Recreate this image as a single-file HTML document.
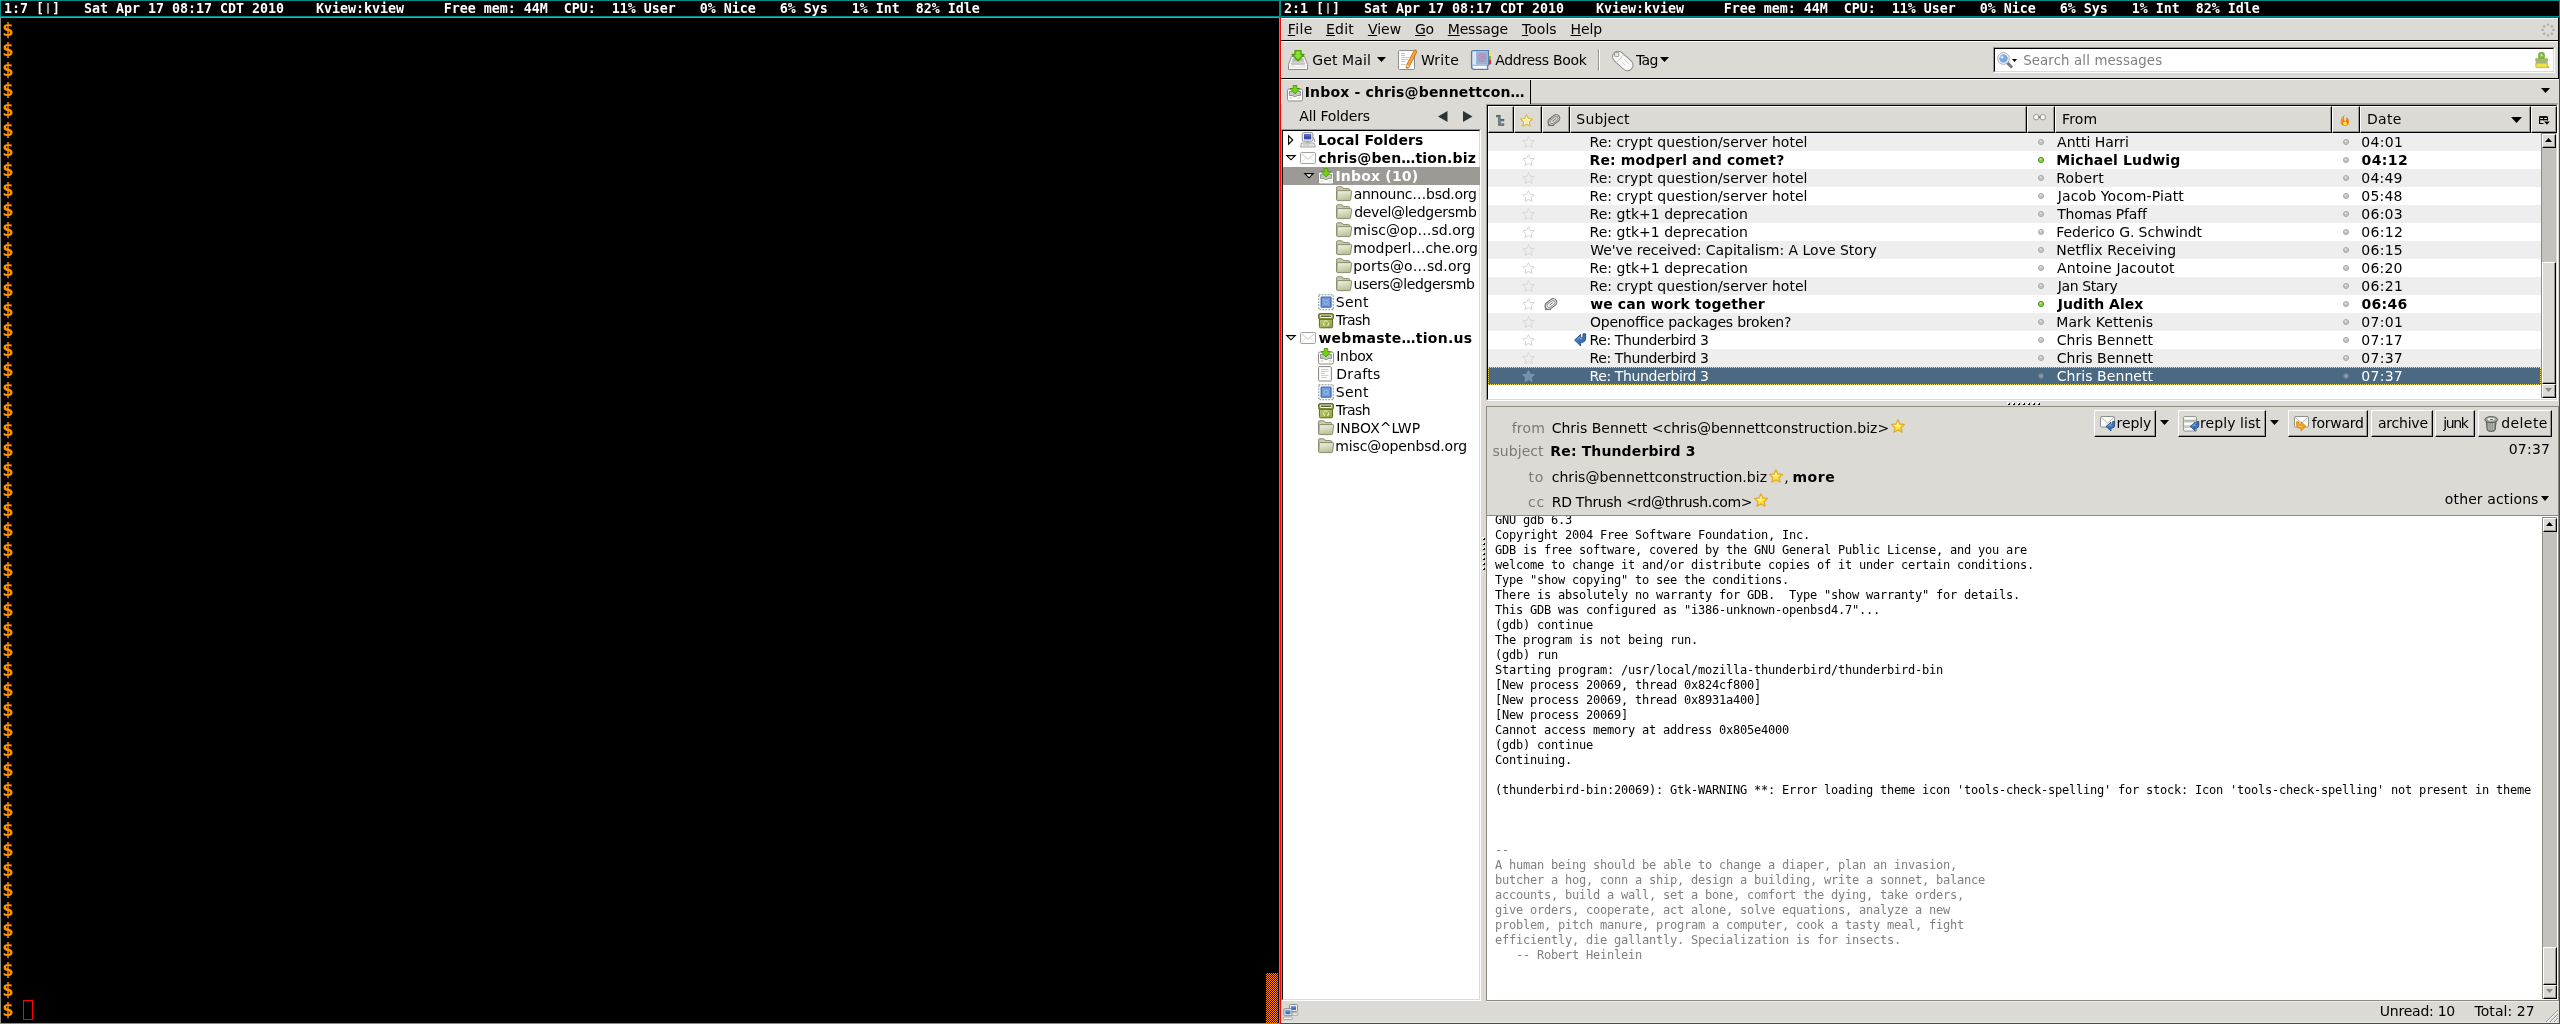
<!DOCTYPE html><html><head><meta charset="utf-8"><title>screen</title><style>
*{box-sizing:border-box}
html,body{margin:0;padding:0}
body{width:2560px;height:1024px;background:#000;overflow:hidden;position:relative;font-family:"DejaVu Sans","Liberation Sans",sans-serif;font-size:14px;line-height:18px;color:#000}
.a{position:absolute}
.t{position:absolute;white-space:pre;line-height:18px;height:18px}
.b{font-weight:bold}
.bar{position:absolute;top:0;height:17px;width:1280px;border:1px solid #008b8b;background:#000;color:#fff;font:bold 13.3333px/15px "DejaVu Sans Mono","Liberation Mono",monospace;white-space:pre;overflow:hidden}
.bar span{position:absolute;left:3px;top:0px;letter-spacing:-0.027px}
.bar i{font-style:normal;display:inline-block;width:8px;text-align:center;font-size:10px;position:relative;top:-2.5px;letter-spacing:0}
.term{position:absolute;left:0;top:17px;width:1280px;height:1007px;border:1px solid #8a8a8a;background:#000}
.d{transform:scaleX(1.18);transform-origin:0 0;position:absolute;left:2.3px;width:12px;height:20px;color:#ff9000;font:bold 16.8px/20px "DejaVu Sans Mono","Liberation Mono",monospace}
.tb{position:absolute;left:1280px;top:17px;width:1280px;height:1007px;border:1px solid #f00;background:#dcdad5}
.hl{position:absolute;height:1px;left:1281px;width:1278px}
.mono{position:absolute;white-space:pre;font:12px/15px "DejaVu Sans Mono","Liberation Mono",monospace;letter-spacing:-0.2246px;height:15px;left:1495px}
.g{color:#808080}
.row{position:absolute;left:1488px;width:1053px;height:18px}
.odd{background:#eee}
.sunk{position:absolute;border:1px solid;border-color:#000 #fff #fff #000;background:#fff}
.btn{position:absolute;border:1px solid;border-color:#fff #000 #000 #fff;background:#dcdad5;box-shadow:inset -1px -1px 0 #9a9894}
.hc{position:absolute;top:106px;height:27px;border:1px solid;border-color:#fff #000 #000 #fff;background:#dcdad5;box-shadow:inset -1px -1px 0 #9a9894}
.lab{color:#7a7a78}
svg{position:absolute;overflow:visible}
</style></head><body><div style="position:absolute;left:0;top:0;width:2560px;height:1024px;will-change:transform">
<div class="term"></div>
<div class="bar" style="left:0"><span>1:7 [<i>|</i>]   Sat Apr 17 08:17 CDT 2010    Kview:kview     Free mem: 44M  CPU:  11% User   0% Nice   6% Sys   1% Int  82% Idle</span></div>
<div class="d" style="top:20px">$</div>
<div class="d" style="top:40px">$</div>
<div class="d" style="top:60px">$</div>
<div class="d" style="top:80px">$</div>
<div class="d" style="top:100px">$</div>
<div class="d" style="top:120px">$</div>
<div class="d" style="top:140px">$</div>
<div class="d" style="top:160px">$</div>
<div class="d" style="top:180px">$</div>
<div class="d" style="top:200px">$</div>
<div class="d" style="top:220px">$</div>
<div class="d" style="top:240px">$</div>
<div class="d" style="top:260px">$</div>
<div class="d" style="top:280px">$</div>
<div class="d" style="top:300px">$</div>
<div class="d" style="top:320px">$</div>
<div class="d" style="top:340px">$</div>
<div class="d" style="top:360px">$</div>
<div class="d" style="top:380px">$</div>
<div class="d" style="top:400px">$</div>
<div class="d" style="top:420px">$</div>
<div class="d" style="top:440px">$</div>
<div class="d" style="top:460px">$</div>
<div class="d" style="top:480px">$</div>
<div class="d" style="top:500px">$</div>
<div class="d" style="top:520px">$</div>
<div class="d" style="top:540px">$</div>
<div class="d" style="top:560px">$</div>
<div class="d" style="top:580px">$</div>
<div class="d" style="top:600px">$</div>
<div class="d" style="top:620px">$</div>
<div class="d" style="top:640px">$</div>
<div class="d" style="top:660px">$</div>
<div class="d" style="top:680px">$</div>
<div class="d" style="top:700px">$</div>
<div class="d" style="top:720px">$</div>
<div class="d" style="top:740px">$</div>
<div class="d" style="top:760px">$</div>
<div class="d" style="top:780px">$</div>
<div class="d" style="top:800px">$</div>
<div class="d" style="top:820px">$</div>
<div class="d" style="top:840px">$</div>
<div class="d" style="top:860px">$</div>
<div class="d" style="top:880px">$</div>
<div class="d" style="top:900px">$</div>
<div class="d" style="top:920px">$</div>
<div class="d" style="top:940px">$</div>
<div class="d" style="top:960px">$</div>
<div class="d" style="top:980px">$</div>
<div class="d" style="top:1000px">$</div>
<div class="a" style="left:23px;top:1000px;width:10px;height:20px;border:1px solid #f00"></div>
<div class="a" style="left:1266px;top:973px;width:12px;height:50px;background-color:#000;background-image:conic-gradient(#ff9000 25%,#000 0 50%,#ff9000 0 75%,#000 0);background-size:2px 2px"></div>
<div class="tb"></div>
<div class="bar" style="left:1280px"><span>2:1 [<i>|</i>]   Sat Apr 17 08:17 CDT 2010    Kview:kview     Free mem: 44M  CPU:  11% User   0% Nice   6% Sys   1% Int  82% Idle</span></div>
<div class="a" style="left:1281px;top:18px;width:1278px;height:1px;background:#fff"></div>
<div class="a" style="left:1281px;top:18px;width:1px;height:22px;background:#fff"></div>
<div class="a" style="left:1281px;top:40px;width:1278px;height:1px;background:#000"></div>
<div class="a" style="left:1281px;top:41px;width:1278px;height:1px;background:#fff"></div>
<div class="a" style="left:2558px;top:18px;width:1px;height:61px;background:#000"></div>
<div class="t " style="left:1287.79px;top:20px;letter-spacing:0.389px;"><u>F</u>ile</div>
<div class="t " style="left:1325.94px;top:20px;letter-spacing:0.228px;"><u>E</u>dit</div>
<div class="t " style="left:1367.92px;top:20px;letter-spacing:0.021px;"><u>V</u>iew</div>
<div class="t " style="left:1415.05px;top:20px;letter-spacing:-0.486px;"><u>G</u>o</div>
<div class="t " style="left:1447.79px;top:20px;letter-spacing:-0.184px;"><u>M</u>essage</div>
<div class="t " style="left:1521.93px;top:20px;letter-spacing:0.057px;"><u>T</u>ools</div>
<div class="t " style="left:1570.54px;top:20px;letter-spacing:-0.094px;"><u>H</u>elp</div>
<div class="a" style="left:1281px;top:78px;width:1278px;height:1px;background:#000"></div>
<div class="a" style="left:1281px;top:79px;width:1278px;height:1px;background:#fff"></div>
<div class="a" style="left:1281px;top:41px;width:1px;height:37px;background:#fff"></div>
<div class="t " style="left:1312.20px;top:51px;letter-spacing:0.129px;">Get Mail</div>
<div class="t " style="left:1420.92px;top:51px;letter-spacing:0.248px;">Write</div>
<div class="t " style="left:1495.17px;top:51px;letter-spacing:-0.295px;">Address Book</div>
<div class="t " style="left:1636.03px;top:51px;letter-spacing:-0.636px;">Tag</div>
<div class="a" style="left:1598px;top:49px;width:1px;height:22px;background:#9a9894"></div>
<div class="a" style="left:1599px;top:49px;width:1px;height:22px;background:#fff"></div>
<svg class="a" style="left:1377px;top:57px" width="9" height="5"><polygon points="0,0 9,0 4.5,5" fill="#000"/></svg>
<svg class="a" style="left:1660px;top:57px" width="9" height="5"><polygon points="0,0 9,0 4.5,5" fill="#000"/></svg>
<svg class="a" style="left:1288px;top:50px" width="20" height="21" viewBox="0 0 20 21"><polygon points="3.5,6.5 16.5,6.5 19.5,14.5 19.5,19.5 0.5,19.5 0.5,14.5" fill="#f6f6f4" stroke="#8c8e89" stroke-width="1" stroke-linejoin="round"/><defs><linearGradient id="rg" x1="0" y1="0" x2="0" y2="1"><stop offset="0" stop-color="#a3a5a0"/><stop offset="0.55" stop-color="#c4c6c2"/><stop offset="1" stop-color="#e6e6e3"/></linearGradient></defs><polygon points="4.8,8.5 15.2,8.5 17,13.8 3,13.8" fill="url(#rg)"/><path d="M1.5,14.5 H7 L8,16 H12 L13,14.5 H18.5 V18.5 H1.5 Z" fill="#ecece9" stroke="#fff" stroke-width="0.8"/><path d="M3,14 H17" stroke="#9c9e99" stroke-width="1"/><polygon points="7,0.6 13,0.6 13,4.5 16,4.5 10,10.8 4,4.5 7,4.5" fill="#86e030" stroke="#4c9a08" stroke-width="1.3" stroke-linejoin="round"/></svg>
<svg class="a" style="left:1397px;top:50px" width="21" height="21" viewBox="0 0 21 21"><rect x="1.5" y="0.5" width="16" height="19" rx="1" fill="#fff" stroke="#8c8e89"/><path d="M4,3.5H8 M4,5.5H8 M4,7.5H12.5 M4,9.5H11.5 M4,11.5H8.5 M4,14.5H8.5" stroke="#c6c8c4" stroke-width="1"/><path d="M18.2,1.6 L10.6,16.4" stroke="#ce7a1d" stroke-width="4" stroke-linecap="round"/><path d="M18,1.8 L10.8,16" stroke="#f9a33d" stroke-width="2.2" stroke-linecap="round"/><polygon points="9.3,14.6 12.3,16.2 9.6,18.2" fill="#f5d9a8"/><polygon points="9.5,17 10.6,17.6 9.6,18.4" fill="#222"/></svg>
<svg class="a" style="left:1471px;top:50px" width="21" height="21" viewBox="0 0 21 21"><rect x="17" y="1.2" width="3" height="5" fill="#fce94f"/><rect x="17" y="6" width="3" height="4.2" fill="#8ab62c"/><path d="M17,10 h3 v3.2 q0,1.6 -3,1.6 z" fill="#ef2929"/><path d="M2.5,0.5 H17.5 V14.5 Q17.5,15.5 16.5,15.8 L16.8,19.5 H3 Q0.5,19.5 0.5,17 V2.5 Q0.5,0.5 2.5,0.5 Z" fill="#a6c0de" stroke="#5a7db0" stroke-width="1.2"/><rect x="1.6" y="1.6" width="3.4" height="13" fill="#dbe6f4"/><rect x="5.6" y="2" width="10.6" height="12" fill="#94b2d6"/><path d="M2.2,16 H15.5 L16,18.6 H3 Q1.6,18.4 2.2,16 Z" fill="#fbfbfb"/><circle cx="11" cy="7.6" r="3.6" fill="none" stroke="#c77aa6" stroke-width="0.9"/><circle cx="11" cy="7.6" r="1.4" fill="none" stroke="#c77aa6" stroke-width="0.9"/><path d="M12.6,6 V8.8 M9.6,11.3 H12.6" stroke="#c77aa6" stroke-width="0.9"/></svg>
<svg class="a" style="left:1612px;top:50px" width="22" height="22" viewBox="0 0 22 22"><g transform="rotate(42 11 11)"><rect x="-1.0" y="5.5" width="23.6" height="11.2" rx="5.6" fill="#f8f9f7" stroke="#8c8e89" stroke-width="1"/><path d="M7.2,6 V16.4" stroke="#c2c4c0" stroke-width="0.9"/><path d="M11,9 H17.5 M11,12.6 H15.5" stroke="#d0d2ce" stroke-width="0.9"/></g><rect x="2.6" y="2.4" width="4.2" height="4.2" rx="1" fill="#e9e9e6" stroke="#8c8e89" stroke-width="0.9"/></svg>
<svg class="a" style="left:2541px;top:23px" width="14" height="14" viewBox="0 0 14 14"><circle cx="12.40" cy="7.00" r="1.2" fill="#aeaca7"/><circle cx="10.82" cy="10.82" r="1.2" fill="#aeaca7"/><circle cx="7.00" cy="12.40" r="1.2" fill="#aeaca7"/><circle cx="3.18" cy="10.82" r="1.2" fill="#aeaca7"/><circle cx="1.60" cy="7.00" r="1.2" fill="#aeaca7"/><circle cx="3.18" cy="3.18" r="1.2" fill="#aeaca7"/><circle cx="7.00" cy="1.60" r="1.2" fill="#aeaca7"/><circle cx="10.82" cy="3.18" r="1.2" fill="#aeaca7"/></svg>
<div class="a" style="left:1993px;top:47px;width:562px;height:26px;border:1px solid;border-color:#9a9895 #fff #fff #9a9895;background:#fff"><div style="width:100%;height:100%;border:1px solid;border-color:#000 #dcdad5 #dcdad5 #000"></div></div>
<div class="t g" style="left:2023.13px;top:52px;letter-spacing:0.130px;font-size:13.3333px">Search all messages</div>
<svg class="a" style="left:2012px;top:59px" width="5" height="3"><polygon points="0,0 5,0 2.5,3" fill="#000"/></svg>
<svg class="a" style="left:1997px;top:52px" width="16" height="16" viewBox="0 0 16 16"><path d="M9.6,10.2 L14.2,14.6" stroke="#7c7e7a" stroke-width="3" stroke-linecap="round"/><circle cx="6.5" cy="6.5" r="5.8" fill="#fff" stroke="#a6a8a4" stroke-width="1"/><circle cx="6.5" cy="6.5" r="4.3" fill="#79a8e2"/><circle cx="5" cy="5" r="1.6" fill="#d5e5f7"/></svg>
<svg class="a" style="left:2535px;top:52px" width="15" height="17" viewBox="0 0 15 17"><rect x="3.6" y="0.3" width="5.8" height="7" rx="2.6" fill="#8fba4e" stroke="#6a9a2c" stroke-width="0.8"/><circle cx="6.5" cy="3.2" r="1" fill="#d9ecc0"/><rect x="0.6" y="6.4" width="12" height="3" rx="1" fill="#9cc35c" stroke="#76a438" stroke-width="0.6"/><rect x="0.8" y="9.2" width="11.6" height="2" fill="#a9aba6"/><path d="M0.8,11.2 H12.4 V14.6 H14 V15.6 H1.6 Q0.6,15.6 0.8,14.4 Z" fill="#efe14b" stroke="#b9a51c" stroke-width="0.7"/></svg>
<div class="a" style="left:1281px;top:80px;width:1px;height:24px;background:#fff"></div>
<div class="a" style="left:1530px;top:80px;width:1px;height:24px;background:#000"></div>
<div class="a" style="left:1531px;top:103px;width:1027px;height:1px;background:#aaa7a2"></div>
<div class="t b" style="left:1304.70px;top:83px;letter-spacing:0.165px;">Inbox - chris@bennettcon…</div>
<svg class="a" style="left:1287px;top:85px" width="16" height="17" viewBox="0 0 16 17"><rect x="0.5" y="4" width="15" height="12" rx="1.5" fill="#fdfdfc" stroke="#8c8e89"/><path d="M2.5,6.5 H13.5 V10.5 H10 L9.2,11.6 H6.8 L6,10.5 H2.5 Z" fill="#c4c6c1" stroke="#8c8e89" stroke-width="0.9"/><path d="M2.5,13 H5.5 M10.5,13 H13.5" stroke="#c9cbc6" stroke-width="1"/><polygon points="6.2,0.5 9.8,0.5 9.8,3.5 13,3.5 8,9 3,3.5 6.2,3.5" fill="#73d216" stroke="#4e9a06" stroke-width="0.9" stroke-linejoin="round"/></svg>
<svg class="a" style="left:2541px;top:88px" width="9" height="5"><polygon points="0,0 9,0 4.5,5" fill="#000"/></svg>
<div class="t " style="left:1299.22px;top:107px;letter-spacing:-0.148px;">All Folders</div>
<svg class="a" style="left:1438px;top:111px" width="10" height="11"><polygon points="9.5,0 9.5,11 0,5.5" fill="#2e3436"/></svg>
<svg class="a" style="left:1463px;top:111px" width="10" height="11"><polygon points="0,0 0,11 9.5,5.5" fill="#2e3436"/></svg>
<div class="a" style="left:1281px;top:129px;width:200px;height:872px;border:1px solid;border-color:#9a9895 #fff #fff #9a9895;background:#fff"><div style="width:100%;height:100%;border:1px solid;border-color:#000 #dcdad5 #dcdad5 #000"></div></div>
<div class="a" style="left:1283px;top:167px;width:197px;height:18px;background:#9d9a96"></div>
<div class="t b" style="left:1317.80px;top:131px;letter-spacing:0.119px;">Local Folders</div>
<svg class="a" style="left:1300px;top:132px" width="16" height="16" viewBox="0 0 16 16"><path d="M12.5,5 q2.6,1 2,5" fill="none" stroke="#777" stroke-width="0.7"/><rect x="2.3" y="0.6" width="10.6" height="8.6" rx="1.3" fill="#f4f4f2" stroke="#868783" stroke-width="0.9"/><rect x="4" y="2.2" width="7.2" height="5.2" fill="#3a49ae"/><rect x="4.6" y="2.8" width="6" height="1.6" fill="#5d6fc4"/><rect x="5.6" y="9.4" width="4" height="1.2" fill="#a9aaa6"/><path d="M1.6,11 H14 L15.4,15 H0.4 Z" fill="#f0f0ee" stroke="#8c8e89" stroke-width="0.8"/><path d="M3,13 H10 M11.2,13 H12.6" stroke="#b5b7b2" stroke-width="1"/></svg>
<div class="t b" style="left:1318.28px;top:149px;letter-spacing:0.142px;">chris@ben…tion.biz</div>
<svg class="a" style="left:1300px;top:149px" width="16" height="16" viewBox="0 0 16 16"><rect x="0.5" y="3.5" width="15" height="11" rx="1.2" fill="#fcfcfb" stroke="#a0a29d"/><path d="M1.8,5 L8,10.2 L14.2,5" fill="none" stroke="#c6c8c3" stroke-width="0.9"/><path d="M1.8,13.2 L6,9 M14.2,13.2 L10,9" stroke="#dcdedb" stroke-width="0.8"/></svg>
<div class="t b" style="left:1335.40px;top:167px;letter-spacing:0.199px;color:#fff;">Inbox (10)</div>
<svg class="a" style="left:1318px;top:168px" width="16" height="17" viewBox="0 0 16 17"><rect x="0.5" y="4" width="15" height="12" rx="1.5" fill="#fdfdfc" stroke="#8c8e89"/><path d="M2.5,6.5 H13.5 V10.5 H10 L9.2,11.6 H6.8 L6,10.5 H2.5 Z" fill="#c4c6c1" stroke="#8c8e89" stroke-width="0.9"/><path d="M2.5,13 H5.5 M10.5,13 H13.5" stroke="#c9cbc6" stroke-width="1"/><polygon points="6.2,0.5 9.8,0.5 9.8,3.5 13,3.5 8,9 3,3.5 6.2,3.5" fill="#73d216" stroke="#4e9a06" stroke-width="0.9" stroke-linejoin="round"/></svg>
<div class="t " style="left:1353.66px;top:185px;letter-spacing:-0.248px;">announc…bsd.org</div>
<svg class="a" style="left:1336px;top:186px" width="16" height="16" viewBox="0 0 16 16"><defs><linearGradient id="fg" x1="0" y1="0" x2="0.3" y2="1"><stop offset="0" stop-color="#f1f3e4"/><stop offset="0.55" stop-color="#d6d9bd"/><stop offset="1" stop-color="#bcc09a"/></linearGradient></defs><path d="M0.6,13.6 V1.8 Q0.6,0.8 1.6,0.8 H5.6 Q6.4,0.8 6.8,1.6 L7.2,2.6 H12.6 Q13.6,2.6 13.6,3.6 V5" fill="#c9cda9" stroke="#7f8262" stroke-width="0.9"/><path d="M2,4.6 H15 Q15.8,4.6 15.6,5.6 L14.6,13.6 Q14.5,14.6 13.5,14.6 H1.6 Q0.6,14.6 0.7,13.6 L1.2,5.4 Q1.3,4.6 2,4.6 Z" fill="url(#fg)" stroke="#7f8262" stroke-width="0.9"/></svg>
<div class="t " style="left:1354.16px;top:203px;letter-spacing:-0.281px;">devel@ledgersmb</div>
<svg class="a" style="left:1336px;top:204px" width="16" height="16" viewBox="0 0 16 16"><defs><linearGradient id="fg" x1="0" y1="0" x2="0.3" y2="1"><stop offset="0" stop-color="#f1f3e4"/><stop offset="0.55" stop-color="#d6d9bd"/><stop offset="1" stop-color="#bcc09a"/></linearGradient></defs><path d="M0.6,13.6 V1.8 Q0.6,0.8 1.6,0.8 H5.6 Q6.4,0.8 6.8,1.6 L7.2,2.6 H12.6 Q13.6,2.6 13.6,3.6 V5" fill="#c9cda9" stroke="#7f8262" stroke-width="0.9"/><path d="M2,4.6 H15 Q15.8,4.6 15.6,5.6 L14.6,13.6 Q14.5,14.6 13.5,14.6 H1.6 Q0.6,14.6 0.7,13.6 L1.2,5.4 Q1.3,4.6 2,4.6 Z" fill="url(#fg)" stroke="#7f8262" stroke-width="0.9"/></svg>
<div class="t " style="left:1353.36px;top:221px;letter-spacing:0.017px;">misc@op…sd.org</div>
<svg class="a" style="left:1336px;top:222px" width="16" height="16" viewBox="0 0 16 16"><defs><linearGradient id="fg" x1="0" y1="0" x2="0.3" y2="1"><stop offset="0" stop-color="#f1f3e4"/><stop offset="0.55" stop-color="#d6d9bd"/><stop offset="1" stop-color="#bcc09a"/></linearGradient></defs><path d="M0.6,13.6 V1.8 Q0.6,0.8 1.6,0.8 H5.6 Q6.4,0.8 6.8,1.6 L7.2,2.6 H12.6 Q13.6,2.6 13.6,3.6 V5" fill="#c9cda9" stroke="#7f8262" stroke-width="0.9"/><path d="M2,4.6 H15 Q15.8,4.6 15.6,5.6 L14.6,13.6 Q14.5,14.6 13.5,14.6 H1.6 Q0.6,14.6 0.7,13.6 L1.2,5.4 Q1.3,4.6 2,4.6 Z" fill="url(#fg)" stroke="#7f8262" stroke-width="0.9"/></svg>
<div class="t " style="left:1353.36px;top:239px;letter-spacing:-0.021px;">modperl…che.org</div>
<svg class="a" style="left:1336px;top:240px" width="16" height="16" viewBox="0 0 16 16"><defs><linearGradient id="fg" x1="0" y1="0" x2="0.3" y2="1"><stop offset="0" stop-color="#f1f3e4"/><stop offset="0.55" stop-color="#d6d9bd"/><stop offset="1" stop-color="#bcc09a"/></linearGradient></defs><path d="M0.6,13.6 V1.8 Q0.6,0.8 1.6,0.8 H5.6 Q6.4,0.8 6.8,1.6 L7.2,2.6 H12.6 Q13.6,2.6 13.6,3.6 V5" fill="#c9cda9" stroke="#7f8262" stroke-width="0.9"/><path d="M2,4.6 H15 Q15.8,4.6 15.6,5.6 L14.6,13.6 Q14.5,14.6 13.5,14.6 H1.6 Q0.6,14.6 0.7,13.6 L1.2,5.4 Q1.3,4.6 2,4.6 Z" fill="url(#fg)" stroke="#7f8262" stroke-width="0.9"/></svg>
<div class="t " style="left:1353.36px;top:257px;letter-spacing:0.126px;">ports@o…sd.org</div>
<svg class="a" style="left:1336px;top:258px" width="16" height="16" viewBox="0 0 16 16"><defs><linearGradient id="fg" x1="0" y1="0" x2="0.3" y2="1"><stop offset="0" stop-color="#f1f3e4"/><stop offset="0.55" stop-color="#d6d9bd"/><stop offset="1" stop-color="#bcc09a"/></linearGradient></defs><path d="M0.6,13.6 V1.8 Q0.6,0.8 1.6,0.8 H5.6 Q6.4,0.8 6.8,1.6 L7.2,2.6 H12.6 Q13.6,2.6 13.6,3.6 V5" fill="#c9cda9" stroke="#7f8262" stroke-width="0.9"/><path d="M2,4.6 H15 Q15.8,4.6 15.6,5.6 L14.6,13.6 Q14.5,14.6 13.5,14.6 H1.6 Q0.6,14.6 0.7,13.6 L1.2,5.4 Q1.3,4.6 2,4.6 Z" fill="url(#fg)" stroke="#7f8262" stroke-width="0.9"/></svg>
<div class="t " style="left:1353.42px;top:275px;letter-spacing:-0.346px;">users@ledgersmb</div>
<svg class="a" style="left:1336px;top:276px" width="16" height="16" viewBox="0 0 16 16"><defs><linearGradient id="fg" x1="0" y1="0" x2="0.3" y2="1"><stop offset="0" stop-color="#f1f3e4"/><stop offset="0.55" stop-color="#d6d9bd"/><stop offset="1" stop-color="#bcc09a"/></linearGradient></defs><path d="M0.6,13.6 V1.8 Q0.6,0.8 1.6,0.8 H5.6 Q6.4,0.8 6.8,1.6 L7.2,2.6 H12.6 Q13.6,2.6 13.6,3.6 V5" fill="#c9cda9" stroke="#7f8262" stroke-width="0.9"/><path d="M2,4.6 H15 Q15.8,4.6 15.6,5.6 L14.6,13.6 Q14.5,14.6 13.5,14.6 H1.6 Q0.6,14.6 0.7,13.6 L1.2,5.4 Q1.3,4.6 2,4.6 Z" fill="url(#fg)" stroke="#7f8262" stroke-width="0.9"/></svg>
<div class="t " style="left:1335.65px;top:293px;letter-spacing:0.361px;">Sent</div>
<svg class="a" style="left:1318px;top:294px" width="16" height="17" viewBox="0 0 16 17"><rect x="0.8" y="0.8" width="14.4" height="14.8" fill="#fdfdfc" stroke="#a3a59f" stroke-width="1.5" stroke-dasharray="1.7 1.25"/><rect x="1.7" y="1.7" width="12.6" height="13" fill="#fdfdfc"/><rect x="3.2" y="3.2" width="9.8" height="10" rx="0.6" fill="#6f9ad6" stroke="#3c6cc0" stroke-width="1.3"/><circle cx="8.1" cy="8.2" r="2.1" fill="none" stroke="#a9c4ea" stroke-width="0.8"/><path d="M4.6,4.6 L6,6 M11.6,4.6 L10.2,6 M4.6,11.8 L6,10.4 M11.6,11.8 L10.2,10.4" stroke="#a9c4ea" stroke-width="0.6"/></svg>
<div class="t " style="left:1336.03px;top:311px;letter-spacing:-0.588px;">Trash</div>
<svg class="a" style="left:1318px;top:313px" width="16" height="16" viewBox="0 0 16 16"><defs><linearGradient id="tg" x1="0" y1="0" x2="1" y2="1"><stop offset="0" stop-color="#c3cc78"/><stop offset="1" stop-color="#8f9c3c"/></linearGradient></defs><path d="M1.4,6 H14.6 V13.6 Q14.6,14.8 13.4,14.8 H2.6 Q1.4,14.8 1.4,13.6 Z" fill="url(#tg)" stroke="#5b6a1e" stroke-width="1"/><rect x="0.5" y="0.6" width="15" height="5.6" rx="1.6" fill="#8b9a3a" stroke="#5b6a1e" stroke-width="1"/><rect x="1.8" y="1.8" width="12.4" height="3.2" rx="1.4" fill="#f3f4ee"/><rect x="2.6" y="2.4" width="10.8" height="1.7" rx="0.8" fill="#5a5c58"/><path d="M6.2,8.4 L8,7.6 L9.6,8.6 M10.4,9.6 L10.6,11.6 L9,12.4 M7,12.6 L5.6,11.4 L5.8,9.6" fill="none" stroke="#e4e9c4" stroke-width="1.1"/></svg>
<div class="t b" style="left:1318.41px;top:329px;letter-spacing:0.263px;">webmaste…tion.us</div>
<svg class="a" style="left:1300px;top:329px" width="16" height="16" viewBox="0 0 16 16"><rect x="0.5" y="3.5" width="15" height="11" rx="1.2" fill="#fcfcfb" stroke="#a0a29d"/><path d="M1.8,5 L8,10.2 L14.2,5" fill="none" stroke="#c6c8c3" stroke-width="0.9"/><path d="M1.8,13.2 L6,9 M14.2,13.2 L10,9" stroke="#dcdedb" stroke-width="0.8"/></svg>
<div class="t " style="left:1336.24px;top:347px;letter-spacing:-0.295px;">Inbox</div>
<svg class="a" style="left:1318px;top:348px" width="16" height="17" viewBox="0 0 16 17"><rect x="0.5" y="4" width="15" height="12" rx="1.5" fill="#fdfdfc" stroke="#8c8e89"/><path d="M2.5,6.5 H13.5 V10.5 H10 L9.2,11.6 H6.8 L6,10.5 H2.5 Z" fill="#c4c6c1" stroke="#8c8e89" stroke-width="0.9"/><path d="M2.5,13 H5.5 M10.5,13 H13.5" stroke="#c9cbc6" stroke-width="1"/><polygon points="6.2,0.5 9.8,0.5 9.8,3.5 13,3.5 8,9 3,3.5 6.2,3.5" fill="#73d216" stroke="#4e9a06" stroke-width="0.9" stroke-linejoin="round"/></svg>
<div class="t " style="left:1336.24px;top:365px;letter-spacing:0.303px;">Drafts</div>
<svg class="a" style="left:1318px;top:366px" width="14" height="16" viewBox="0 0 14 16"><rect x="0.6" y="0.6" width="12.8" height="14.4" rx="1" fill="#fcfcfb" stroke="#868783" stroke-width="1"/><path d="M3,3.5H10.5 M3,5.5H10.5 M3,7.5H7 M3,9.5H10.5 M3,11.5H9" stroke="#cfd0cc" stroke-width="1"/></svg>
<div class="t " style="left:1335.65px;top:383px;letter-spacing:0.361px;">Sent</div>
<svg class="a" style="left:1318px;top:384px" width="16" height="17" viewBox="0 0 16 17"><rect x="0.8" y="0.8" width="14.4" height="14.8" fill="#fdfdfc" stroke="#a3a59f" stroke-width="1.5" stroke-dasharray="1.7 1.25"/><rect x="1.7" y="1.7" width="12.6" height="13" fill="#fdfdfc"/><rect x="3.2" y="3.2" width="9.8" height="10" rx="0.6" fill="#6f9ad6" stroke="#3c6cc0" stroke-width="1.3"/><circle cx="8.1" cy="8.2" r="2.1" fill="none" stroke="#a9c4ea" stroke-width="0.8"/><path d="M4.6,4.6 L6,6 M11.6,4.6 L10.2,6 M4.6,11.8 L6,10.4 M11.6,11.8 L10.2,10.4" stroke="#a9c4ea" stroke-width="0.6"/></svg>
<div class="t " style="left:1336.03px;top:401px;letter-spacing:-0.588px;">Trash</div>
<svg class="a" style="left:1318px;top:403px" width="16" height="16" viewBox="0 0 16 16"><defs><linearGradient id="tg" x1="0" y1="0" x2="1" y2="1"><stop offset="0" stop-color="#c3cc78"/><stop offset="1" stop-color="#8f9c3c"/></linearGradient></defs><path d="M1.4,6 H14.6 V13.6 Q14.6,14.8 13.4,14.8 H2.6 Q1.4,14.8 1.4,13.6 Z" fill="url(#tg)" stroke="#5b6a1e" stroke-width="1"/><rect x="0.5" y="0.6" width="15" height="5.6" rx="1.6" fill="#8b9a3a" stroke="#5b6a1e" stroke-width="1"/><rect x="1.8" y="1.8" width="12.4" height="3.2" rx="1.4" fill="#f3f4ee"/><rect x="2.6" y="2.4" width="10.8" height="1.7" rx="0.8" fill="#5a5c58"/><path d="M6.2,8.4 L8,7.6 L9.6,8.6 M10.4,9.6 L10.6,11.6 L9,12.4 M7,12.6 L5.6,11.4 L5.8,9.6" fill="none" stroke="#e4e9c4" stroke-width="1.1"/></svg>
<div class="t " style="left:1336.24px;top:419px;letter-spacing:-0.040px;">INBOX^LWP</div>
<svg class="a" style="left:1318px;top:420px" width="16" height="16" viewBox="0 0 16 16"><defs><linearGradient id="fg" x1="0" y1="0" x2="0.3" y2="1"><stop offset="0" stop-color="#f1f3e4"/><stop offset="0.55" stop-color="#d6d9bd"/><stop offset="1" stop-color="#bcc09a"/></linearGradient></defs><path d="M0.6,13.6 V1.8 Q0.6,0.8 1.6,0.8 H5.6 Q6.4,0.8 6.8,1.6 L7.2,2.6 H12.6 Q13.6,2.6 13.6,3.6 V5" fill="#c9cda9" stroke="#7f8262" stroke-width="0.9"/><path d="M2,4.6 H15 Q15.8,4.6 15.6,5.6 L14.6,13.6 Q14.5,14.6 13.5,14.6 H1.6 Q0.6,14.6 0.7,13.6 L1.2,5.4 Q1.3,4.6 2,4.6 Z" fill="url(#fg)" stroke="#7f8262" stroke-width="0.9"/></svg>
<div class="t " style="left:1335.36px;top:437px;letter-spacing:-0.143px;">misc@openbsd.org</div>
<svg class="a" style="left:1318px;top:438px" width="16" height="16" viewBox="0 0 16 16"><defs><linearGradient id="fg" x1="0" y1="0" x2="0.3" y2="1"><stop offset="0" stop-color="#f1f3e4"/><stop offset="0.55" stop-color="#d6d9bd"/><stop offset="1" stop-color="#bcc09a"/></linearGradient></defs><path d="M0.6,13.6 V1.8 Q0.6,0.8 1.6,0.8 H5.6 Q6.4,0.8 6.8,1.6 L7.2,2.6 H12.6 Q13.6,2.6 13.6,3.6 V5" fill="#c9cda9" stroke="#7f8262" stroke-width="0.9"/><path d="M2,4.6 H15 Q15.8,4.6 15.6,5.6 L14.6,13.6 Q14.5,14.6 13.5,14.6 H1.6 Q0.6,14.6 0.7,13.6 L1.2,5.4 Q1.3,4.6 2,4.6 Z" fill="url(#fg)" stroke="#7f8262" stroke-width="0.9"/></svg>
<svg class="a" style="left:1288px;top:135px" width="7" height="10"><polygon points="0.6,0.8 0.6,9.2 4.8,5" fill="#fff" stroke="#000" stroke-width="1.1"/></svg>
<svg class="a" style="left:1285.5px;top:155px" width="10" height="7"><polygon points="0.8,0.6 9.2,0.6 5,4.8" fill="#fff" stroke="#000" stroke-width="1.1"/></svg>
<svg class="a" style="left:1303.5px;top:173px" width="10" height="7"><polygon points="0.8,0.6 9.2,0.6 5,4.8" fill="#fff" stroke="#000" stroke-width="1.1"/></svg>
<svg class="a" style="left:1285.5px;top:335px" width="10" height="7"><polygon points="0.8,0.6 9.2,0.6 5,4.8" fill="#fff" stroke="#000" stroke-width="1.1"/></svg>
<div class="a" style="left:1486px;top:104px;width:1072px;height:297px;border:1px solid;border-color:#9a9895 #fff #fff #9a9895;background:#fff"><div style="width:100%;height:100%;border:1px solid;border-color:#000 #dcdad5 #dcdad5 #000"></div></div>
<div class="hc" style="left:1488px;width:26px"></div>
<div class="hc" style="left:1514px;width:28px"></div>
<div class="hc" style="left:1542px;width:28px"></div>
<div class="hc" style="left:1570px;width:457px"></div>
<div class="hc" style="left:2027px;width:28px"></div>
<div class="hc" style="left:2055px;width:277px"></div>
<div class="hc" style="left:2332px;width:28px"></div>
<div class="hc" style="left:2360px;width:171px"></div>
<div class="hc" style="left:2531px;width:26px"></div>
<div class="t " style="left:1576.35px;top:110px;letter-spacing:0.152px;">Subject</div>
<div class="t " style="left:2062.04px;top:110px;letter-spacing:0.159px;">From</div>
<div class="t " style="left:2367.04px;top:110px;letter-spacing:0.283px;">Date</div>
<svg class="a" style="left:2511px;top:117px" width="11" height="6"><polygon points="0,0 11,0 5.5,6" fill="#000"/></svg>
<svg class="a" style="left:1496px;top:115px" width="9" height="11" viewBox="0 0 9 11"><path d="M0.2,1.2 H3.4 V9.6 H8.2 M3.4,5.2 H8.2" fill="none" stroke="#43525a" stroke-width="2.3" stroke-linejoin="miter"/><path d="M0.8,1.2 H3.4 V9.6 H7.6 M3.4,5.2 H7.6" fill="none" stroke="#9eaab0" stroke-width="0.6"/></svg>
<svg class="a" style="left:1520px;top:114px" width="13" height="12.6" viewBox="0 0 16 15.6"><polygon points="8,0.8 10.2,5.6 15.4,6.2 11.5,9.8 12.6,15 8,12.4 3.4,15 4.5,9.8 0.6,6.2 5.8,5.6" fill="#fffdf2" stroke="#dcb526" stroke-width="1.3" stroke-linejoin="round"/><polygon points="8,5.4 9,7.6 11.2,7.9 9.6,9.4 10,11.6 8,10.5 6,11.6 6.4,9.4 4.8,7.9 7,7.6" fill="#f6e88e"/></svg>
<svg class="a" style="left:1548px;top:114px" width="12" height="12" viewBox="0 0 12 12"><g transform="rotate(-38 6 6)"><rect x="-0.6" y="2.4" width="13" height="7.2" rx="3.6" fill="none" stroke="#6f716d" stroke-width="1.1"/><rect x="1.6" y="3.9" width="9" height="4.2" rx="2.1" fill="none" stroke="#8f918d" stroke-width="1"/><path d="M4,6 H9" stroke="#6f716d" stroke-width="0.9"/></g><path d="M0.4,7.4 V11.6 H6" fill="none" stroke="#6f716d" stroke-width="1"/></svg>
<svg class="a" style="left:2033px;top:114px" width="13" height="7" viewBox="0 0 13 7"><circle cx="3.2" cy="3.2" r="2.7" fill="#f4f8fc" stroke="#8c8e89" stroke-width="0.9"/><circle cx="9.8" cy="3.2" r="2.7" fill="#f4f8fc" stroke="#8c8e89" stroke-width="0.9"/><rect x="5.6" y="2.4" width="1.8" height="1.6" fill="#6c6e6a"/></svg>
<svg class="a" style="left:2340px;top:114px" width="10" height="12.4" viewBox="0 0 10 12.4"><path d="M5.4,0.2 Q3.6,2 3.8,4.4 Q4,6.6 5.4,7.2 Q6.8,6.4 6.4,3 Q9.6,5.6 8.8,9 Q7.8,12 4.8,12 Q1,11.6 0.6,8 Q0.4,4 5.4,0.2 Z" fill="#f57900"/><path d="M3,3.6 Q1.6,6 2,9" stroke="#fcaf3e" stroke-width="1" fill="none"/><circle cx="5" cy="9.4" r="1.9" fill="#fce94f"/></svg>
<svg class="a" style="left:2539px;top:116px" width="11" height="10" viewBox="0 0 11 10"><path d="M0.6,1 H8.6" stroke="#000" stroke-width="1.8"/><path d="M0.6,0.4 V7.5 H4.4 M0.6,3.6 H8.6 M4.6,1 V4.4 M8.5,1 V4.6" fill="none" stroke="#000" stroke-width="1.1"/><polygon points="5,5.4 10.8,5.4 7.9,8.8" fill="#000"/></svg>
<div class="row odd" style="top:133px"></div>
<div class="t " style="left:1589.54px;top:133px;letter-spacing:0.036px;">Re: crypt question/server hotel</div>
<div class="t " style="left:2057.12px;top:133px;letter-spacing:-0.031px;">Antti Harri</div>
<div class="t " style="left:2361.35px;top:133px;letter-spacing:0.276px;">04:01</div>
<svg class="a" style="left:1522px;top:136px" width="13" height="12" viewBox="0 0 16 15.6"><polygon points="8,0.8 10.2,5.6 15.4,6.2 11.5,9.8 12.6,15 8,12.4 3.4,15 4.5,9.8 0.6,6.2 5.8,5.6" fill="none" stroke="#d6d6d6" stroke-width="1.3" stroke-linejoin="round"/></svg>
<svg class="a" style="left:2038px;top:139px" width="6" height="6"><circle cx="3" cy="3" r="2.5" fill="#c6c6c6" stroke="#a6a6a6" stroke-width="1"/><circle cx="2.6" cy="2.2" r="0.9" fill="#e4e4e4"/></svg>
<svg class="a" style="left:2343px;top:139px" width="6" height="6"><circle cx="3" cy="3" r="2.5" fill="#c6c6c6" stroke="#a6a6a6" stroke-width="1"/><circle cx="2.6" cy="2.2" r="0.9" fill="#e4e4e4"/></svg>
<div class="t b" style="left:1589.60px;top:151px;letter-spacing:0.119px;">Re: modperl and comet?</div>
<div class="t b" style="left:2056.30px;top:151px;letter-spacing:0.133px;">Michael Ludwig</div>
<div class="t b" style="left:2361.53px;top:151px;letter-spacing:0.390px;">04:12</div>
<svg class="a" style="left:1522px;top:154px" width="13" height="12" viewBox="0 0 16 15.6"><polygon points="8,0.8 10.2,5.6 15.4,6.2 11.5,9.8 12.6,15 8,12.4 3.4,15 4.5,9.8 0.6,6.2 5.8,5.6" fill="none" stroke="#d6d6d6" stroke-width="1.3" stroke-linejoin="round"/></svg>
<svg class="a" style="left:2038px;top:157px" width="6" height="6"><circle cx="3" cy="3" r="2.5" fill="#7ed83a" stroke="#3f8f0c" stroke-width="1"/><circle cx="2.6" cy="2.2" r="0.9" fill="#c4f29c"/></svg>
<svg class="a" style="left:2343px;top:157px" width="6" height="6"><circle cx="3" cy="3" r="2.5" fill="#c6c6c6" stroke="#a6a6a6" stroke-width="1"/><circle cx="2.6" cy="2.2" r="0.9" fill="#e4e4e4"/></svg>
<div class="row odd" style="top:169px"></div>
<div class="t " style="left:1589.54px;top:169px;letter-spacing:0.036px;">Re: crypt question/server hotel</div>
<div class="t " style="left:2056.24px;top:169px;letter-spacing:0.217px;">Robert</div>
<div class="t " style="left:2361.35px;top:169px;letter-spacing:0.199px;">04:49</div>
<svg class="a" style="left:1522px;top:172px" width="13" height="12" viewBox="0 0 16 15.6"><polygon points="8,0.8 10.2,5.6 15.4,6.2 11.5,9.8 12.6,15 8,12.4 3.4,15 4.5,9.8 0.6,6.2 5.8,5.6" fill="none" stroke="#d6d6d6" stroke-width="1.3" stroke-linejoin="round"/></svg>
<svg class="a" style="left:2038px;top:175px" width="6" height="6"><circle cx="3" cy="3" r="2.5" fill="#c6c6c6" stroke="#a6a6a6" stroke-width="1"/><circle cx="2.6" cy="2.2" r="0.9" fill="#e4e4e4"/></svg>
<svg class="a" style="left:2343px;top:175px" width="6" height="6"><circle cx="3" cy="3" r="2.5" fill="#c6c6c6" stroke="#a6a6a6" stroke-width="1"/><circle cx="2.6" cy="2.2" r="0.9" fill="#e4e4e4"/></svg>
<div class="t " style="left:1589.54px;top:187px;letter-spacing:0.036px;">Re: crypt question/server hotel</div>
<div class="t " style="left:2057.71px;top:187px;letter-spacing:0.128px;">Jacob Yocom-Piatt</div>
<div class="t " style="left:2361.35px;top:187px;letter-spacing:0.193px;">05:48</div>
<svg class="a" style="left:1522px;top:190px" width="13" height="12" viewBox="0 0 16 15.6"><polygon points="8,0.8 10.2,5.6 15.4,6.2 11.5,9.8 12.6,15 8,12.4 3.4,15 4.5,9.8 0.6,6.2 5.8,5.6" fill="none" stroke="#d6d6d6" stroke-width="1.3" stroke-linejoin="round"/></svg>
<svg class="a" style="left:2038px;top:193px" width="6" height="6"><circle cx="3" cy="3" r="2.5" fill="#c6c6c6" stroke="#a6a6a6" stroke-width="1"/><circle cx="2.6" cy="2.2" r="0.9" fill="#e4e4e4"/></svg>
<svg class="a" style="left:2343px;top:193px" width="6" height="6"><circle cx="3" cy="3" r="2.5" fill="#c6c6c6" stroke="#a6a6a6" stroke-width="1"/><circle cx="2.6" cy="2.2" r="0.9" fill="#e4e4e4"/></svg>
<div class="row odd" style="top:205px"></div>
<div class="t " style="left:1589.54px;top:205px;letter-spacing:0.016px;">Re: gtk+1 deprecation</div>
<div class="t " style="left:2057.23px;top:205px;letter-spacing:-0.187px;">Thomas Pfaff</div>
<div class="t " style="left:2361.35px;top:205px;letter-spacing:0.234px;">06:03</div>
<svg class="a" style="left:1522px;top:208px" width="13" height="12" viewBox="0 0 16 15.6"><polygon points="8,0.8 10.2,5.6 15.4,6.2 11.5,9.8 12.6,15 8,12.4 3.4,15 4.5,9.8 0.6,6.2 5.8,5.6" fill="none" stroke="#d6d6d6" stroke-width="1.3" stroke-linejoin="round"/></svg>
<svg class="a" style="left:2038px;top:211px" width="6" height="6"><circle cx="3" cy="3" r="2.5" fill="#c6c6c6" stroke="#a6a6a6" stroke-width="1"/><circle cx="2.6" cy="2.2" r="0.9" fill="#e4e4e4"/></svg>
<svg class="a" style="left:2343px;top:211px" width="6" height="6"><circle cx="3" cy="3" r="2.5" fill="#c6c6c6" stroke="#a6a6a6" stroke-width="1"/><circle cx="2.6" cy="2.2" r="0.9" fill="#e4e4e4"/></svg>
<div class="t " style="left:1589.54px;top:223px;letter-spacing:0.016px;">Re: gtk+1 deprecation</div>
<div class="t " style="left:2056.24px;top:223px;letter-spacing:-0.095px;">Federico G. Schwindt</div>
<div class="t " style="left:2361.35px;top:223px;letter-spacing:0.304px;">06:12</div>
<svg class="a" style="left:1522px;top:226px" width="13" height="12" viewBox="0 0 16 15.6"><polygon points="8,0.8 10.2,5.6 15.4,6.2 11.5,9.8 12.6,15 8,12.4 3.4,15 4.5,9.8 0.6,6.2 5.8,5.6" fill="none" stroke="#d6d6d6" stroke-width="1.3" stroke-linejoin="round"/></svg>
<svg class="a" style="left:2038px;top:229px" width="6" height="6"><circle cx="3" cy="3" r="2.5" fill="#c6c6c6" stroke="#a6a6a6" stroke-width="1"/><circle cx="2.6" cy="2.2" r="0.9" fill="#e4e4e4"/></svg>
<svg class="a" style="left:2343px;top:229px" width="6" height="6"><circle cx="3" cy="3" r="2.5" fill="#c6c6c6" stroke="#a6a6a6" stroke-width="1"/><circle cx="2.6" cy="2.2" r="0.9" fill="#e4e4e4"/></svg>
<div class="row odd" style="top:241px"></div>
<div class="t " style="left:1590.17px;top:241px;letter-spacing:-0.025px;">We&#x27;ve received: Capitalism: A Love Story</div>
<div class="t " style="left:2056.24px;top:241px;letter-spacing:0.129px;">Netflix Receiving</div>
<div class="t " style="left:2361.35px;top:241px;letter-spacing:0.259px;">06:15</div>
<svg class="a" style="left:1522px;top:244px" width="13" height="12" viewBox="0 0 16 15.6"><polygon points="8,0.8 10.2,5.6 15.4,6.2 11.5,9.8 12.6,15 8,12.4 3.4,15 4.5,9.8 0.6,6.2 5.8,5.6" fill="none" stroke="#d6d6d6" stroke-width="1.3" stroke-linejoin="round"/></svg>
<svg class="a" style="left:2038px;top:247px" width="6" height="6"><circle cx="3" cy="3" r="2.5" fill="#c6c6c6" stroke="#a6a6a6" stroke-width="1"/><circle cx="2.6" cy="2.2" r="0.9" fill="#e4e4e4"/></svg>
<svg class="a" style="left:2343px;top:247px" width="6" height="6"><circle cx="3" cy="3" r="2.5" fill="#c6c6c6" stroke="#a6a6a6" stroke-width="1"/><circle cx="2.6" cy="2.2" r="0.9" fill="#e4e4e4"/></svg>
<div class="t " style="left:1589.54px;top:259px;letter-spacing:0.016px;">Re: gtk+1 deprecation</div>
<div class="t " style="left:2057.12px;top:259px;letter-spacing:0.118px;">Antoine Jacoutot</div>
<div class="t " style="left:2361.35px;top:259px;letter-spacing:0.186px;">06:20</div>
<svg class="a" style="left:1522px;top:262px" width="13" height="12" viewBox="0 0 16 15.6"><polygon points="8,0.8 10.2,5.6 15.4,6.2 11.5,9.8 12.6,15 8,12.4 3.4,15 4.5,9.8 0.6,6.2 5.8,5.6" fill="none" stroke="#d6d6d6" stroke-width="1.3" stroke-linejoin="round"/></svg>
<svg class="a" style="left:2038px;top:265px" width="6" height="6"><circle cx="3" cy="3" r="2.5" fill="#c6c6c6" stroke="#a6a6a6" stroke-width="1"/><circle cx="2.6" cy="2.2" r="0.9" fill="#e4e4e4"/></svg>
<svg class="a" style="left:2343px;top:265px" width="6" height="6"><circle cx="3" cy="3" r="2.5" fill="#c6c6c6" stroke="#a6a6a6" stroke-width="1"/><circle cx="2.6" cy="2.2" r="0.9" fill="#e4e4e4"/></svg>
<div class="row odd" style="top:277px"></div>
<div class="t " style="left:1589.54px;top:277px;letter-spacing:0.036px;">Re: crypt question/server hotel</div>
<div class="t " style="left:2057.71px;top:277px;letter-spacing:-0.380px;">Jan Stary</div>
<div class="t " style="left:2361.35px;top:277px;letter-spacing:0.276px;">06:21</div>
<svg class="a" style="left:1522px;top:280px" width="13" height="12" viewBox="0 0 16 15.6"><polygon points="8,0.8 10.2,5.6 15.4,6.2 11.5,9.8 12.6,15 8,12.4 3.4,15 4.5,9.8 0.6,6.2 5.8,5.6" fill="none" stroke="#d6d6d6" stroke-width="1.3" stroke-linejoin="round"/></svg>
<svg class="a" style="left:2038px;top:283px" width="6" height="6"><circle cx="3" cy="3" r="2.5" fill="#c6c6c6" stroke="#a6a6a6" stroke-width="1"/><circle cx="2.6" cy="2.2" r="0.9" fill="#e4e4e4"/></svg>
<svg class="a" style="left:2343px;top:283px" width="6" height="6"><circle cx="3" cy="3" r="2.5" fill="#c6c6c6" stroke="#a6a6a6" stroke-width="1"/><circle cx="2.6" cy="2.2" r="0.9" fill="#e4e4e4"/></svg>
<div class="t b" style="left:1590.16px;top:295px;letter-spacing:0.111px;">we can work together</div>
<div class="t b" style="left:2057.75px;top:295px;letter-spacing:-0.023px;">Judith Alex</div>
<div class="t b" style="left:2361.53px;top:295px;letter-spacing:0.273px;">06:46</div>
<svg class="a" style="left:1522px;top:298px" width="13" height="12" viewBox="0 0 16 15.6"><polygon points="8,0.8 10.2,5.6 15.4,6.2 11.5,9.8 12.6,15 8,12.4 3.4,15 4.5,9.8 0.6,6.2 5.8,5.6" fill="none" stroke="#d6d6d6" stroke-width="1.3" stroke-linejoin="round"/></svg>
<svg class="a" style="left:2038px;top:301px" width="6" height="6"><circle cx="3" cy="3" r="2.5" fill="#7ed83a" stroke="#3f8f0c" stroke-width="1"/><circle cx="2.6" cy="2.2" r="0.9" fill="#c4f29c"/></svg>
<svg class="a" style="left:2343px;top:301px" width="6" height="6"><circle cx="3" cy="3" r="2.5" fill="#c6c6c6" stroke="#a6a6a6" stroke-width="1"/><circle cx="2.6" cy="2.2" r="0.9" fill="#e4e4e4"/></svg>
<svg class="a" style="left:1545px;top:298px" width="12" height="12" viewBox="0 0 12 12"><g transform="rotate(-38 6 6)"><rect x="-0.6" y="2.4" width="13" height="7.2" rx="3.6" fill="none" stroke="#6f716d" stroke-width="1.1"/><rect x="1.6" y="3.9" width="9" height="4.2" rx="2.1" fill="none" stroke="#8f918d" stroke-width="1"/><path d="M4,6 H9" stroke="#6f716d" stroke-width="0.9"/></g><path d="M0.4,7.4 V11.6 H6" fill="none" stroke="#6f716d" stroke-width="1"/></svg>
<div class="row odd" style="top:313px"></div>
<div class="t " style="left:1589.95px;top:313px;letter-spacing:-0.203px;">Openoffice packages broken?</div>
<div class="t " style="left:2056.24px;top:313px;letter-spacing:0.095px;">Mark Kettenis</div>
<div class="t " style="left:2361.35px;top:313px;letter-spacing:0.276px;">07:01</div>
<svg class="a" style="left:1522px;top:316px" width="13" height="12" viewBox="0 0 16 15.6"><polygon points="8,0.8 10.2,5.6 15.4,6.2 11.5,9.8 12.6,15 8,12.4 3.4,15 4.5,9.8 0.6,6.2 5.8,5.6" fill="none" stroke="#d6d6d6" stroke-width="1.3" stroke-linejoin="round"/></svg>
<svg class="a" style="left:2038px;top:319px" width="6" height="6"><circle cx="3" cy="3" r="2.5" fill="#c6c6c6" stroke="#a6a6a6" stroke-width="1"/><circle cx="2.6" cy="2.2" r="0.9" fill="#e4e4e4"/></svg>
<svg class="a" style="left:2343px;top:319px" width="6" height="6"><circle cx="3" cy="3" r="2.5" fill="#c6c6c6" stroke="#a6a6a6" stroke-width="1"/><circle cx="2.6" cy="2.2" r="0.9" fill="#e4e4e4"/></svg>
<div class="t " style="left:1589.54px;top:331px;letter-spacing:-0.397px;">Re: Thunderbird 3</div>
<div class="t " style="left:2056.65px;top:331px;letter-spacing:0.069px;">Chris Bennett</div>
<div class="t " style="left:2361.35px;top:331px;letter-spacing:0.252px;">07:17</div>
<svg class="a" style="left:1522px;top:334px" width="13" height="12" viewBox="0 0 16 15.6"><polygon points="8,0.8 10.2,5.6 15.4,6.2 11.5,9.8 12.6,15 8,12.4 3.4,15 4.5,9.8 0.6,6.2 5.8,5.6" fill="none" stroke="#d6d6d6" stroke-width="1.3" stroke-linejoin="round"/></svg>
<svg class="a" style="left:2038px;top:337px" width="6" height="6"><circle cx="3" cy="3" r="2.5" fill="#c6c6c6" stroke="#a6a6a6" stroke-width="1"/><circle cx="2.6" cy="2.2" r="0.9" fill="#e4e4e4"/></svg>
<svg class="a" style="left:2343px;top:337px" width="6" height="6"><circle cx="3" cy="3" r="2.5" fill="#c6c6c6" stroke="#a6a6a6" stroke-width="1"/><circle cx="2.6" cy="2.2" r="0.9" fill="#e4e4e4"/></svg>
<svg class="a" style="left:1574px;top:333px" width="13" height="14" viewBox="0 0 13 14"><path d="M9,0.8 H11.6 V5 Q11.6,9.4 7.4,9.4 H6.6 V13 L0.6,7 L6.6,1.6 V4.8 H7.4 Q9,4.8 9,3.4 Z" fill="#3f72b8" stroke="#204a87" stroke-width="0.9" stroke-linejoin="round"/><path d="M2.4,7 L6,3.8 V5.6 H8" fill="none" stroke="#8fb3e0" stroke-width="0.8"/></svg>
<div class="row odd" style="top:349px"></div>
<div class="t " style="left:1589.54px;top:349px;letter-spacing:-0.397px;">Re: Thunderbird 3</div>
<div class="t " style="left:2056.65px;top:349px;letter-spacing:0.069px;">Chris Bennett</div>
<div class="t " style="left:2361.35px;top:349px;letter-spacing:0.252px;">07:37</div>
<svg class="a" style="left:1522px;top:352px" width="13" height="12" viewBox="0 0 16 15.6"><polygon points="8,0.8 10.2,5.6 15.4,6.2 11.5,9.8 12.6,15 8,12.4 3.4,15 4.5,9.8 0.6,6.2 5.8,5.6" fill="none" stroke="#d6d6d6" stroke-width="1.3" stroke-linejoin="round"/></svg>
<svg class="a" style="left:2038px;top:355px" width="6" height="6"><circle cx="3" cy="3" r="2.5" fill="#c6c6c6" stroke="#a6a6a6" stroke-width="1"/><circle cx="2.6" cy="2.2" r="0.9" fill="#e4e4e4"/></svg>
<svg class="a" style="left:2343px;top:355px" width="6" height="6"><circle cx="3" cy="3" r="2.5" fill="#c6c6c6" stroke="#a6a6a6" stroke-width="1"/><circle cx="2.6" cy="2.2" r="0.9" fill="#e4e4e4"/></svg>
<div class="a" style="left:1488px;top:367px;width:1053px;height:18px;background:#4b6983"></div>
<div class="a" style="left:1488px;top:367px;width:1053px;height:18px;border:1px dotted #f8e068"></div>
<div class="t " style="left:1589.54px;top:367px;letter-spacing:-0.397px;color:#fff;">Re: Thunderbird 3</div>
<div class="t " style="left:2056.65px;top:367px;letter-spacing:0.069px;color:#fff;">Chris Bennett</div>
<div class="t " style="left:2361.35px;top:367px;letter-spacing:0.252px;color:#fff;">07:37</div>
<svg class="a" style="left:1522px;top:370px" width="13" height="12" viewBox="0 0 16 15.6"><polygon points="8,0.8 10.2,5.6 15.4,6.2 11.5,9.8 12.6,15 8,12.4 3.4,15 4.5,9.8 0.6,6.2 5.8,5.6" fill="#7590ab" stroke="#7c96b0" stroke-width="1.3" stroke-linejoin="round"/></svg>
<svg class="a" style="left:2038px;top:373px" width="6" height="6"><circle cx="3" cy="3" r="2.4" fill="#8e99a4" stroke="#6a7d90" stroke-width="1"/></svg>
<svg class="a" style="left:2343px;top:373px" width="6" height="6"><circle cx="3" cy="3" r="2.4" fill="#8e99a4" stroke="#6a7d90" stroke-width="1"/></svg>
<div class="a" style="left:2541px;top:133px;width:15px;height:265px;background:#c4c2bd;border-left:1px solid #8d8a83;border-top:1px solid #8d8a83"></div>
<div class="btn" style="left:2542px;top:134px;width:14px;height:14px"></div>
<div class="btn" style="left:2542px;top:384px;width:14px;height:14px"></div>
<div class="btn" style="left:2542px;top:262px;width:14px;height:122px"></div>
<svg class="a" style="left:2545px;top:138px" width="7" height="4"><polygon points="0,4 7,4 3.5,0" fill="#000"/></svg>
<svg class="a" style="left:2545px;top:388px" width="7" height="4"><polygon points="0,0 7,0 3.5,4" fill="#8a8a8a"/></svg>
<div class="a" style="left:2007px;top:402px;width:2px;height:2px;background:#fff"></div>
<div class="a" style="left:2008px;top:403px;width:2px;height:2px;background:#000"></div>
<div class="a" style="left:2008px;top:403px;width:1px;height:1px;background:#fff"></div>
<div class="a" style="left:2012px;top:402px;width:2px;height:2px;background:#fff"></div>
<div class="a" style="left:2013px;top:403px;width:2px;height:2px;background:#000"></div>
<div class="a" style="left:2013px;top:403px;width:1px;height:1px;background:#fff"></div>
<div class="a" style="left:2017px;top:402px;width:2px;height:2px;background:#fff"></div>
<div class="a" style="left:2018px;top:403px;width:2px;height:2px;background:#000"></div>
<div class="a" style="left:2018px;top:403px;width:1px;height:1px;background:#fff"></div>
<div class="a" style="left:2022px;top:402px;width:2px;height:2px;background:#fff"></div>
<div class="a" style="left:2023px;top:403px;width:2px;height:2px;background:#000"></div>
<div class="a" style="left:2023px;top:403px;width:1px;height:1px;background:#fff"></div>
<div class="a" style="left:2027px;top:402px;width:2px;height:2px;background:#fff"></div>
<div class="a" style="left:2028px;top:403px;width:2px;height:2px;background:#000"></div>
<div class="a" style="left:2028px;top:403px;width:1px;height:1px;background:#fff"></div>
<div class="a" style="left:2032px;top:402px;width:2px;height:2px;background:#fff"></div>
<div class="a" style="left:2033px;top:403px;width:2px;height:2px;background:#000"></div>
<div class="a" style="left:2033px;top:403px;width:1px;height:1px;background:#fff"></div>
<div class="a" style="left:2037px;top:402px;width:2px;height:2px;background:#fff"></div>
<div class="a" style="left:2038px;top:403px;width:2px;height:2px;background:#000"></div>
<div class="a" style="left:2038px;top:403px;width:1px;height:1px;background:#fff"></div>
<div class="a" style="left:1482px;top:537px;width:2px;height:2px;background:#fff"></div>
<div class="a" style="left:1483px;top:538px;width:2px;height:2px;background:#000"></div>
<div class="a" style="left:1483px;top:538px;width:1px;height:1px;background:#fff"></div>
<div class="a" style="left:1482px;top:542px;width:2px;height:2px;background:#fff"></div>
<div class="a" style="left:1483px;top:543px;width:2px;height:2px;background:#000"></div>
<div class="a" style="left:1483px;top:543px;width:1px;height:1px;background:#fff"></div>
<div class="a" style="left:1482px;top:547px;width:2px;height:2px;background:#fff"></div>
<div class="a" style="left:1483px;top:548px;width:2px;height:2px;background:#000"></div>
<div class="a" style="left:1483px;top:548px;width:1px;height:1px;background:#fff"></div>
<div class="a" style="left:1482px;top:552px;width:2px;height:2px;background:#fff"></div>
<div class="a" style="left:1483px;top:553px;width:2px;height:2px;background:#000"></div>
<div class="a" style="left:1483px;top:553px;width:1px;height:1px;background:#fff"></div>
<div class="a" style="left:1482px;top:557px;width:2px;height:2px;background:#fff"></div>
<div class="a" style="left:1483px;top:558px;width:2px;height:2px;background:#000"></div>
<div class="a" style="left:1483px;top:558px;width:1px;height:1px;background:#fff"></div>
<div class="a" style="left:1482px;top:562px;width:2px;height:2px;background:#fff"></div>
<div class="a" style="left:1483px;top:563px;width:2px;height:2px;background:#000"></div>
<div class="a" style="left:1483px;top:563px;width:1px;height:1px;background:#fff"></div>
<div class="a" style="left:1482px;top:567px;width:2px;height:2px;background:#fff"></div>
<div class="a" style="left:1483px;top:568px;width:2px;height:2px;background:#000"></div>
<div class="a" style="left:1483px;top:568px;width:1px;height:1px;background:#fff"></div>
<div class="a" style="left:1486px;top:406px;width:1073px;height:595px;border:1px solid #8d8a83"></div>
<div class="a" style="left:1487px;top:515px;width:1071px;height:1px;background:#8d8a83"></div>
<div class="t lab" style="left:1511.68px;top:419px;letter-spacing:0.172px;">from</div>
<div class="t " style="left:1551.70px;top:419px;letter-spacing:0.000px;">Chris Bennett &lt;chris@bennettconstruction.biz&gt;</div>
<div class="t lab" style="left:1492.47px;top:442px;letter-spacing:0.057px;">subject</div>
<div class="t b" style="left:1550.35px;top:442px;letter-spacing:0.135px;">Re: Thunderbird 3</div>
<div class="t lab" style="left:1528.49px;top:468px;letter-spacing:0.800px;">to</div>
<div class="t " style="left:1551.71px;top:468px;letter-spacing:0.049px;">chris@bennettconstruction.biz</div>
<div class="t " style="left:1784.24px;top:468px;">,</div>
<div class="t b" style="left:1792.44px;top:468px;letter-spacing:0.576px;">more</div>
<div class="t lab" style="left:1527.96px;top:493px;letter-spacing:0.734px;">cc</div>
<div class="t " style="left:1551.79px;top:493px;letter-spacing:-0.346px;">RD Thrush &lt;rd@thrush.com&gt;</div>
<svg width="0" height="0" style="position:absolute"><defs><radialGradient id="sg" cx="0.35" cy="0.3" r="0.8"><stop offset="0" stop-color="#fffbb0"/><stop offset="0.5" stop-color="#ffe54a"/><stop offset="1" stop-color="#f7c92a"/></radialGradient></defs></svg>
<svg class="a" style="left:1891px;top:419px" width="14" height="14" viewBox="0 0 16 15.8"><polygon points="8,0.8 10.2,5.6 15.4,6.2 11.5,9.8 12.6,15 8,12.4 3.4,15 4.5,9.8 0.6,6.2 5.8,5.6" fill="url(#sg)" stroke="#e2ae2c" stroke-width="1.5" stroke-linejoin="round"/></svg>
<svg class="a" style="left:1769px;top:469.3px" width="14" height="14" viewBox="0 0 16 15.8"><polygon points="8,0.8 10.2,5.6 15.4,6.2 11.5,9.8 12.6,15 8,12.4 3.4,15 4.5,9.8 0.6,6.2 5.8,5.6" fill="url(#sg)" stroke="#e2ae2c" stroke-width="1.5" stroke-linejoin="round"/></svg>
<svg class="a" style="left:1754px;top:493.3px" width="14" height="14" viewBox="0 0 16 15.8"><polygon points="8,0.8 10.2,5.6 15.4,6.2 11.5,9.8 12.6,15 8,12.4 3.4,15 4.5,9.8 0.6,6.2 5.8,5.6" fill="url(#sg)" stroke="#e2ae2c" stroke-width="1.5" stroke-linejoin="round"/></svg>
<div class="btn" style="left:2094px;top:410px;width:62px;height:27px"></div>
<div class="t " style="left:2116.61px;top:414px;letter-spacing:-0.084px;">reply</div>
<div class="btn" style="left:2178px;top:410px;width:88px;height:27px"></div>
<div class="t " style="left:2200.11px;top:414px;letter-spacing:0.052px;">reply list</div>
<div class="btn" style="left:2288px;top:410px;width:80px;height:27px"></div>
<div class="t " style="left:2311.78px;top:414px;letter-spacing:-0.266px;">forward</div>
<div class="btn" style="left:2371px;top:410px;width:62px;height:27px"></div>
<div class="t " style="left:2377.91px;top:414px;letter-spacing:-0.217px;">archive</div>
<div class="btn" style="left:2435px;top:410px;width:40px;height:27px"></div>
<div class="t " style="left:2443.18px;top:414px;letter-spacing:-1.321px;">junk</div>
<div class="btn" style="left:2478px;top:410px;width:74px;height:27px"></div>
<div class="t " style="left:2501.16px;top:414px;letter-spacing:0.442px;">delete</div>
<svg class="a" style="left:2160px;top:420px" width="9" height="5"><polygon points="0,0 9,0 4.5,5" fill="#000"/></svg>
<svg class="a" style="left:2270px;top:420px" width="9" height="5"><polygon points="0,0 9,0 4.5,5" fill="#000"/></svg>
<svg class="a" style="left:2100px;top:416px" width="16" height="16" viewBox="0 0 16 16"><rect x="0.5" y="0.5" width="14" height="10.5" rx="1" fill="#fbfbfa" stroke="#868783" stroke-width="0.9"/><path d="M1,1.3 L7.5,7.01 L14,1.3" fill="none" stroke="#a5a7a2" stroke-width="0.8"/><path d="M14.6,5.4 V9 Q14.6,12.2 11.6,12.2 H11 V15 L6,10.4 L11,6.2 V8.6 H11.6 Q12.6,8.6 12.6,7.6 V5.4 Z" fill="#3f72b8" stroke="#204a87" stroke-width="0.8" stroke-linejoin="round"/><path d="M7.6,10.4 L10.4,8 V9.8 H12" fill="none" stroke="#9bbce4" stroke-width="0.7"/></svg>
<svg class="a" style="left:2183px;top:416px" width="17" height="16" viewBox="0 0 17 16"><rect x="0.6" y="0.6" width="13" height="14.4" rx="1" fill="#fcfcfb" stroke="#868783" stroke-width="0.9"/><rect x="1.2" y="3.6" width="11.8" height="2.8" fill="#babdb6"/><rect x="1.2" y="9.2" width="11.8" height="2.8" fill="#c9ccc6"/><path d="M15.8,5.6 V9 Q15.8,12.2 12.8,12.2 H12.2 V15 L7.2,10.4 L12.2,6.2 V8.6 H12.8 Q13.8,8.6 13.8,7.6 V5.6 Z" fill="#3f72b8" stroke="#204a87" stroke-width="0.8" stroke-linejoin="round"/><path d="M8.8,10.4 L11.6,8 V9.8 H13.2" fill="none" stroke="#9bbce4" stroke-width="0.7"/></svg>
<svg class="a" style="left:2294px;top:416px" width="16" height="16" viewBox="0 0 16 16"><rect x="0.5" y="0.5" width="14" height="10.5" rx="1" fill="#fbfbfa" stroke="#868783" stroke-width="0.9"/><path d="M1,1.3 L7.5,7.01 L14,1.3" fill="none" stroke="#a5a7a2" stroke-width="0.8"/><path d="M2.4,5.8 H5 V7 Q5,8.2 6.2,8.2 H7 V5.8 L12,10.2 L7,15 V12.2 H6.2 Q2.4,12.2 2.4,8.6 Z" fill="#f5a11c" stroke="#d98208" stroke-width="0.7" stroke-linejoin="round"/><path d="M4,9.6 Q4.4,10.6 6,10.4 H8" fill="none" stroke="#fbd28a" stroke-width="0.8"/></svg>
<svg class="a" style="left:2484px;top:416px" width="15" height="16" viewBox="0 0 15 16"><path d="M2.2,4.4 L3.2,14 Q3.4,15.4 7.2,15.4 Q11,15.4 11.2,14 L12.2,4.4 Z" fill="#8f918d" stroke="#4f514d" stroke-width="0.9"/><path d="M5,7 V14 M7.2,7 V14.4 M9.4,7 V14" stroke="#b9bbb6" stroke-width="1"/><ellipse cx="7.2" cy="3.6" rx="6.4" ry="3" fill="#a3a5a0" stroke="#4f514d" stroke-width="0.9"/><ellipse cx="7.2" cy="3.2" rx="3.6" ry="1.4" fill="#ecedea"/><ellipse cx="7.6" cy="3.4" rx="1.6" ry="0.7" fill="#6d6f6b"/></svg>
<div class="t " style="left:2508.75px;top:440px;letter-spacing:0.215px;">07:37</div>
<div class="t " style="left:2444.86px;top:490px;letter-spacing:0.118px;">other actions</div>
<svg class="a" style="left:2541px;top:496px" width="8" height="5"><polygon points="0,0 8,0 4.0,5" fill="#000"/></svg>
<div class="a" style="left:1487px;top:516px;width:1071px;height:484px;background:#fff"></div>
<div class="a" style="left:1488px;top:516px;width:1054px;height:483px;overflow:hidden">
<div class="mono" style="left:7px;top:-3px">GNU gdb 6.3</div>
<div class="mono" style="left:7px;top:12px">Copyright 2004 Free Software Foundation, Inc.</div>
<div class="mono" style="left:7px;top:27px">GDB is free software, covered by the GNU General Public License, and you are</div>
<div class="mono" style="left:7px;top:42px">welcome to change it and/or distribute copies of it under certain conditions.</div>
<div class="mono" style="left:7px;top:57px">Type &quot;show copying&quot; to see the conditions.</div>
<div class="mono" style="left:7px;top:72px">There is absolutely no warranty for GDB.  Type &quot;show warranty&quot; for details.</div>
<div class="mono" style="left:7px;top:87px">This GDB was configured as &quot;i386-unknown-openbsd4.7&quot;...</div>
<div class="mono" style="left:7px;top:102px">(gdb) continue</div>
<div class="mono" style="left:7px;top:117px">The program is not being run.</div>
<div class="mono" style="left:7px;top:132px">(gdb) run</div>
<div class="mono" style="left:7px;top:147px">Starting program: /usr/local/mozilla-thunderbird/thunderbird-bin</div>
<div class="mono" style="left:7px;top:162px">[New process 20069, thread 0x824cf800]</div>
<div class="mono" style="left:7px;top:177px">[New process 20069, thread 0x8931a400]</div>
<div class="mono" style="left:7px;top:192px">[New process 20069]</div>
<div class="mono" style="left:7px;top:207px">Cannot access memory at address 0x805e4000</div>
<div class="mono" style="left:7px;top:222px">(gdb) continue</div>
<div class="mono" style="left:7px;top:237px">Continuing.</div>
<div class="mono" style="left:7px;top:267px">(thunderbird-bin:20069): Gtk-WARNING **: Error loading theme icon &#x27;tools-check-spelling&#x27; for stock: Icon &#x27;tools-check-spelling&#x27; not present in theme</div>
<div class="mono g" style="left:7px;top:327px">-- </div>
<div class="mono g" style="left:7px;top:342px">A human being should be able to change a diaper, plan an invasion,</div>
<div class="mono g" style="left:7px;top:357px">butcher a hog, conn a ship, design a building, write a sonnet, balance</div>
<div class="mono g" style="left:7px;top:372px">accounts, build a wall, set a bone, comfort the dying, take orders,</div>
<div class="mono g" style="left:7px;top:387px">give orders, cooperate, act alone, solve equations, analyze a new</div>
<div class="mono g" style="left:7px;top:402px">problem, pitch manure, program a computer, cook a tasty meal, fight</div>
<div class="mono g" style="left:7px;top:417px">efficiently, die gallantly. Specialization is for insects.</div>
<div class="mono g" style="left:7px;top:432px">   -- Robert Heinlein</div>
</div>
<div class="a" style="left:2542px;top:517px;width:15px;height:482px;background:#c4c2bd;border-left:1px solid #8d8a83;border-top:1px solid #8d8a83"></div>
<div class="btn" style="left:2543px;top:518px;width:14px;height:14px"></div>
<div class="btn" style="left:2543px;top:985px;width:14px;height:14px"></div>
<div class="btn" style="left:2543px;top:947px;width:14px;height:38px"></div>
<svg class="a" style="left:2546px;top:522px" width="7" height="4"><polygon points="0,4 7,4 3.5,0" fill="#000"/></svg>
<svg class="a" style="left:2546px;top:989px" width="7" height="4"><polygon points="0,0 7,0 3.5,4" fill="#8a8a8a"/></svg>
<div class="a" style="left:1486px;top:1001px;width:1073px;height:1px;background:#eceae6"></div>
<div class="a" style="left:1281px;top:1022px;width:1278px;height:1px;background:#e6ebe8"></div>
<div class="t " style="left:2379.85px;top:1002px;letter-spacing:-0.244px;">Unread: 10</div>
<div class="t " style="left:2474.53px;top:1002px;letter-spacing:0.046px;">Total: 27</div>
<svg class="a" style="left:1283px;top:1004px" width="16" height="18" viewBox="0 0 16 18"><rect x="6.5" y="0.5" width="8" height="7" rx="1" fill="#f2f2f0" stroke="#80827e" stroke-width="0.9"/><rect x="8.0" y="2.0" width="5" height="4" fill="#3f6fc4"/><rect x="8.0" y="2.0" width="5" height="1.4" fill="#7ba0dc"/><rect x="6.0" y="8.9" width="9" height="2.4" rx="0.6" fill="#f2f2f0" stroke="#9a9c98" stroke-width="0.8"/><rect x="0.9" y="4.7" width="8" height="7" rx="1" fill="#f2f2f0" stroke="#80827e" stroke-width="0.9"/><rect x="2.4" y="6.2" width="5" height="4" fill="#3f6fc4"/><rect x="2.4" y="6.2" width="5" height="1.4" fill="#7ba0dc"/><rect x="0.4" y="13.100000000000001" width="9" height="2.4" rx="0.6" fill="#f2f2f0" stroke="#9a9c98" stroke-width="0.8"/></svg>
<svg class="a" style="left:2545px;top:1009px" width="13" height="13"><path d="M13,1 L1,13 M13,5 L5,13 M13,9 L9,13" stroke="#9a9894" stroke-width="1"/><path d="M13,2 L2,13 M13,6 L6,13 M13,10 L10,13" stroke="#fff" stroke-width="1"/></svg>
</div></body></html>
